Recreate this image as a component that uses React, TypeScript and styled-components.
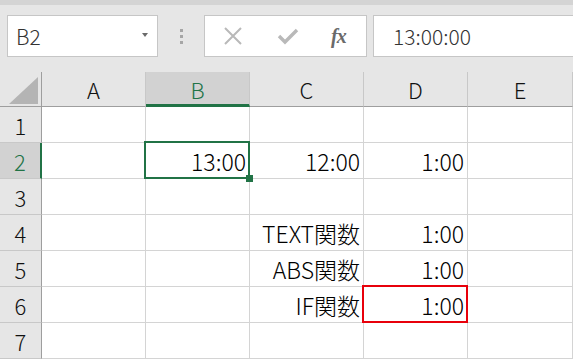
import React from "react";
import styled, { createGlobalStyle, css } from "styled-components";

const FONT = `"Noto Sans CJK JP", "Noto Sans", sans-serif`;

const Global = createGlobalStyle`
  html, body { margin: 0; padding: 0; background: #ffffff; overflow: hidden; }
  body { font-family: ${FONT}; font-weight: 300; }
`;

const Page = styled.div`
  width: 573px;
  height: 360px;
  display: flex;
  flex-direction: column;
  background: #ffffff;
`;

const TopStrip = styled.div`
  height: 5px;
  background: #d4d4d4;
`;

const Toolbar = styled.div`
  height: 67px;
  box-sizing: border-box;
  background: #e6e6e6;
  padding: 10px 0 0 7px;
  display: flex;
  align-items: flex-start;
`;

const NameBox = styled.div`
  width: 151px;
  height: 42px;
  box-sizing: border-box;
  background: #fff;
  border: 1px solid #c6c6c6;
  display: flex;
  align-items: center;
  justify-content: space-between;
  padding: 0 9px 0 8px;
  font-size: 21px;
  color: #333;
`;

const DropArrow = styled.span`
  width: 0;
  height: 0;
  border-left: 3.5px solid transparent;
  border-right: 3.5px solid transparent;
  border-top: 4px solid #6a6a6a;
  margin-top: -3px;
`;

const Grip = styled.div`
  width: 46px;
  height: 42px;
  display: flex;
  flex-direction: column;
  align-items: center;
  justify-content: center;
  gap: 3px;
`;

const GripDot = styled.span`
  width: 3px;
  height: 3px;
  background: #a6a6a6;
`;

const FxBox = styled.div`
  width: 163px;
  height: 42px;
  box-sizing: border-box;
  background: #fff;
  border: 1px solid #c6c6c6;
  display: flex;
  align-items: center;
  padding: 0 0 0 18px;
  gap: 34px;
`;

const FxText = styled.span`
  font-family: "Liberation Serif", "DejaVu Serif", serif;
  font-style: italic;
  font-weight: bold;
  font-size: 20px;
  color: #6a6a6a;
  margin-left: -2px;
  letter-spacing: -1px;
`;

const FormulaInput = styled.div`
  flex: 1;
  margin-left: 6px;
  height: 42px;
  box-sizing: border-box;
  background: #fff;
  border: 1px solid #c6c6c6;
  border-right: none;
  display: flex;
  align-items: center;
  padding-left: 19px;
  font-size: 21px;
  color: #333;
`;

const Sheet = styled.div`
  display: grid;
  grid-template-columns: 42px 104px 104px 114px 104px 1fr;
  grid-template-rows: 35px;
  grid-auto-rows: 36px;
`;

const HeaderCell = styled.div<{ $active?: boolean }>`
  box-sizing: border-box;
  background: ${(p) => (p.$active ? "#d2d2d2" : "#e6e6e6")};
  border-right: 1px solid #c8c8c8;
  border-bottom: ${(p) => (p.$active ? "3px solid #217346" : "1px solid #9e9e9e")};
  display: flex;
  align-items: center;
  justify-content: center;
  font-size: 22px;
  color: ${(p) => (p.$active ? "#217346" : "#111")};
  padding-top: ${(p) => (p.$active ? "2px" : "0")};
`;

const Corner = styled.div`
  box-sizing: border-box;
  background: #e6e6e6;
  border-right: 1px solid #9e9e9e;
  border-bottom: 1px solid #9e9e9e;
  display: flex;
  align-items: flex-end;
  justify-content: flex-end;
  padding: 0 3px 2px 0;
`;

const CornerTriangle = styled.span`
  width: 0;
  height: 0;
  border-left: 29px solid transparent;
  border-bottom: 27px solid #b4b4b4;
`;

const RowHead = styled.div<{ $active?: boolean }>`
  box-sizing: border-box;
  background: ${(p) => (p.$active ? "#d2d2d2" : "#e6e6e6")};
  border-right: ${(p) => (p.$active ? "2px solid #217346" : "1px solid #9e9e9e")};
  border-bottom: 1px solid #c8c8c8;
  display: flex;
  align-items: center;
  justify-content: center;
  font-size: 22px;
  color: ${(p) => (p.$active ? "#217346" : "#111")};
`;

const Cell = styled.div`
  position: relative;
  box-sizing: border-box;
  border-right: 1px solid #d4d4d4;
  border-bottom: 1px solid #d4d4d4;
  display: flex;
  align-items: center;
  justify-content: flex-end;
  padding-right: 3px;
  font-size: 23px;
  color: #000;
  white-space: nowrap;
`;

const Highlight = styled.div<{ $color: string; $handle?: boolean }>`
  position: absolute;
  z-index: 2;
  left: -2px;
  top: -2px;
  right: -1px;
  bottom: -1px;
  border: 2px solid ${(p) => p.$color};
  pointer-events: none;
  ${(p) =>
    p.$handle &&
    css`
      &::after {
        content: "";
        position: absolute;
        right: -5px;
        bottom: -5px;
        width: 7px;
        height: 7px;
        background: #217346;
      }
    `}
`;

const columns = ["A", "B", "C", "D", "E"];

type CellData = { text?: string; box?: "green" | "red" };
const data: Record<number, CellData[]> = {
  1: [{}, {}, {}, {}, {}],
  2: [{}, { text: "13:00", box: "green" }, { text: "12:00" }, { text: "1:00" }, {}],
  3: [{}, {}, {}, {}, {}],
  4: [{}, {}, { text: "TEXT関数" }, { text: "1:00" }, {}],
  5: [{}, {}, { text: "ABS関数" }, { text: "1:00" }, {}],
  6: [{}, {}, { text: "IF関数" }, { text: "1:00", box: "red" }, {}],
  7: [{}, {}, {}, {}, {}],
};

const XIcon = () => (
  <svg width="20" height="20" viewBox="0 0 20 20">
    <path d="M2 2 L18 18 M18 2 L2 18" stroke="#b9b9b9" strokeWidth="2" fill="none" />
  </svg>
);

const CheckIcon = () => (
  <svg width="22" height="18" viewBox="0 0 22 18">
    <path d="M2 9 L8 15 L20 3" stroke="#b9b9b9" strokeWidth="3.4" fill="none" strokeLinejoin="miter" />
  </svg>
);

export default function App() {
  return (
    <Page>
      <Global />
      <TopStrip />
      <Toolbar>
        <NameBox>
          <span>B2</span>
          <DropArrow />
        </NameBox>
        <Grip>
          <GripDot />
          <GripDot />
          <GripDot />
        </Grip>
        <FxBox>
          <XIcon />
          <CheckIcon />
          <FxText>fx</FxText>
        </FxBox>
        <FormulaInput>13:00:00</FormulaInput>
      </Toolbar>
      <Sheet>
        <Corner>
          <CornerTriangle />
        </Corner>
        {columns.map((c) => (
          <HeaderCell key={c} $active={c === "B"}>
            {c}
          </HeaderCell>
        ))}
        {Object.entries(data).map(([row, cells]) => (
          <React.Fragment key={row}>
            <RowHead $active={row === "2"}>{row}</RowHead>
            {cells.map((cell, i) => (
              <Cell key={i}>
                {cell.text}
                {cell.box && (
                  <Highlight
                    $color={cell.box === "green" ? "#217346" : "#e8000b"}
                    $handle={cell.box === "green"}
                  />
                )}
              </Cell>
            ))}
          </React.Fragment>
        ))}
      </Sheet>
    </Page>
  );
}
